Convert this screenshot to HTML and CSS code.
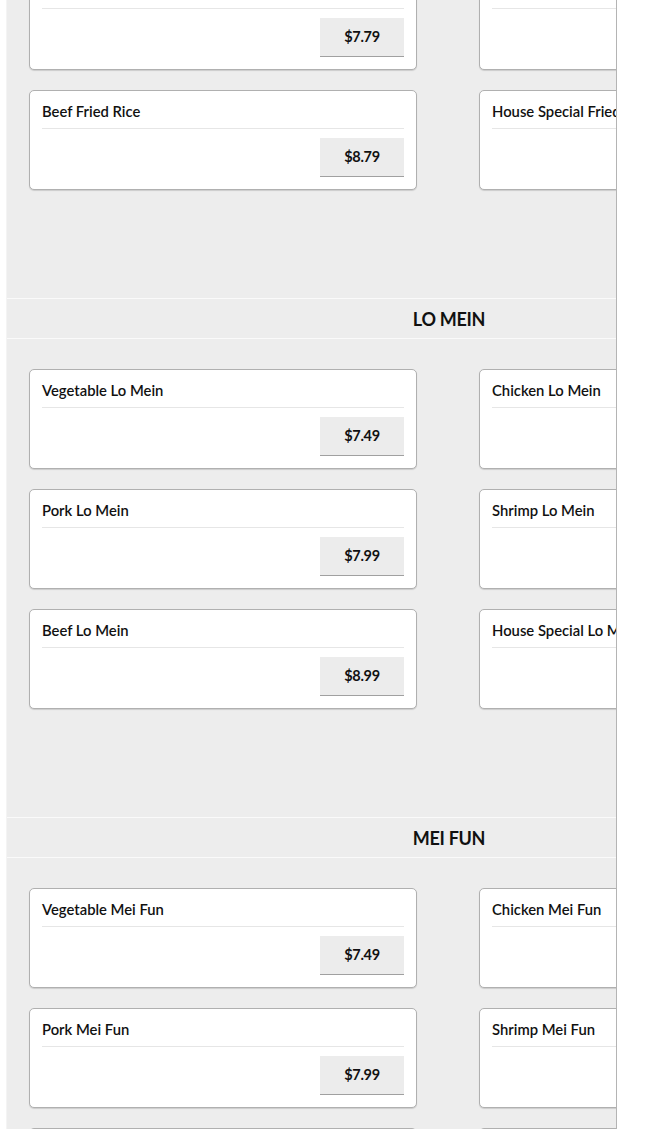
FILE: index.html
```html
<!DOCTYPE html>
<html>
<head>
<meta charset="utf-8">
<link rel="stylesheet" href="styles.css">
</head>
<body>
<div class="page">
  <div class="inner">
    <div class="grid grid-first">
      <div class="card"><div class="title">Pork Fried Rice</div><div class="row"><button class="price">$7.79</button></div></div>
      <div class="card"><div class="title">Shrimp Fried Rice</div><div class="row"><button class="price">$8.29</button></div></div>
      <div class="card"><div class="title">Beef Fried Rice</div><div class="row"><button class="price">$8.79</button></div></div>
      <div class="card"><div class="title">House Special Fried Rice</div><div class="row"><button class="price">$8.99</button></div></div>
    </div>

    <div class="heading">LO MEIN</div>
    <div class="grid">
      <div class="card"><div class="title">Vegetable Lo Mein</div><div class="row"><button class="price">$7.49</button></div></div>
      <div class="card"><div class="title">Chicken Lo Mein</div><div class="row"><button class="price">$7.99</button></div></div>
      <div class="card"><div class="title">Pork Lo Mein</div><div class="row"><button class="price">$7.99</button></div></div>
      <div class="card"><div class="title">Shrimp Lo Mein</div><div class="row"><button class="price">$8.49</button></div></div>
      <div class="card"><div class="title">Beef Lo Mein</div><div class="row"><button class="price">$8.99</button></div></div>
      <div class="card"><div class="title">House Special Lo Mein</div><div class="row"><button class="price">$8.99</button></div></div>
    </div>

    <div class="heading">MEI FUN</div>
    <div class="grid">
      <div class="card"><div class="title">Vegetable Mei Fun</div><div class="row"><button class="price">$7.49</button></div></div>
      <div class="card"><div class="title">Chicken Mei Fun</div><div class="row"><button class="price">$7.99</button></div></div>
      <div class="card"><div class="title">Pork Mei Fun</div><div class="row"><button class="price">$7.99</button></div></div>
      <div class="card"><div class="title">Shrimp Mei Fun</div><div class="row"><button class="price">$8.49</button></div></div>
      <div class="card"><div class="title">Beef Mei Fun</div><div class="row"><button class="price">$8.99</button></div></div>
      <div class="card"><div class="title">House Special Mei Fun</div><div class="row"><button class="price">$8.99</button></div></div>
    </div>
  </div>
</div>
</body>
</html>
```
FILE: styles.css
```css
html, body {
  margin: 0;
  padding: 0;
  background: #fff;
  font-family: "Lato", "Noto Sans", sans-serif;
  color: #111;
}
.page {
  margin-left: 6px;
  width: 609px;
  height: 1129px;
  background: #ededed;
  border-right: 1px solid #b4b4b4;
  border-left: 1px solid #f4f4f4;
  overflow: hidden;
}
.inner {
  width: 884px;
}
.grid {
  display: grid;
  grid-template-columns: 388px 388px;
  column-gap: 62px;
  row-gap: 20px;
  padding: 0 22px;
  margin-top: 30px;
  margin-bottom: 108px;
}
.grid-first {
  margin-top: -30px;
}
.card {
  box-sizing: border-box;
  height: 100px;
  background: #fff;
  border: 1px solid #b0b0b0;
  border-radius: 5px;
  box-shadow: 0 1px 1px rgba(0,0,0,0.14);
  padding: 10px 12px 12px;
}
.title {
  font-size: 14.8px;
  font-weight: 600;
  line-height: 20px;
  height: 20px;
  padding-bottom: 7px;
  border-bottom: 1px solid #e6e6e6;
  white-space: nowrap;
}
.row {
  display: flex;
  justify-content: flex-end;
  margin-top: 9px;
}
.price {
  width: 84px;
  height: 39px;
  box-sizing: border-box;
  background: #ececec;
  border: none;
  border-bottom: 1px solid #a0a0a0;
  font-family: inherit;
  font-size: 14.5px;
  font-weight: 700;
  color: #111;
  padding: 0 0 1px;
  letter-spacing: -0.3px;
}
.heading {
  box-sizing: border-box;
  height: 41px;
  border-top: 1px solid #fafafa;
  border-bottom: 1px solid #fafafa;
  text-align: center;
  font-size: 18px;
  font-weight: 700;
  line-height: 41px;
  letter-spacing: -0.3px;
}
```
